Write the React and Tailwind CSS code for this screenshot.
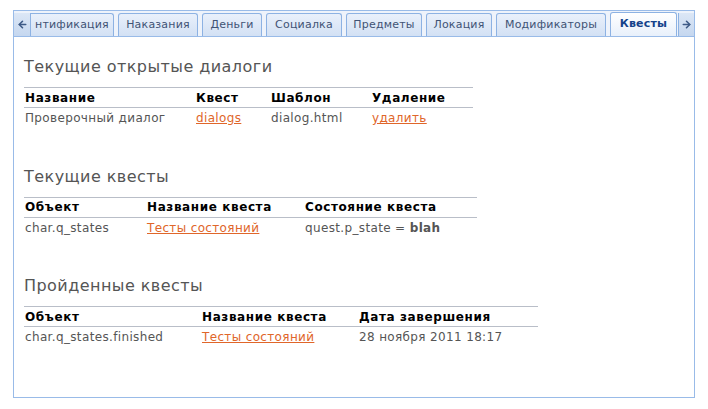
import { ArrowLeft, ArrowRight } from 'lucide-react';

const tabs = [
  ['Наказания', 'w-[80px]'],
  ['Деньги', 'w-[60px]'],
  ['Социалка', 'w-[76px]'],
  ['Предметы', 'w-[76px]'],
  ['Локация', 'w-[66px]'],
  ['Модификаторы', 'w-[110px]'],
];

function Tab({ label, active, className = '' }) {
  return (
    <div
      className={
        'shrink-0 flex items-center justify-center rounded-t-[3px] border border-b-0 border-[#8db2e3] text-[11px] tracking-[0.2px] ' +
        (active
          ? 'h-[24px] bg-gradient-to-b from-[#ffffff] to-[#e8f0fb] text-[#15428b] font-bold '
          : 'h-[23px] bg-gradient-to-b from-[#e9f0fb] to-[#d3e1f4] text-[#3f5375] ') +
        className
      }
    >
      {label}
    </div>
  );
}

function Section({ title, width, cols, row }) {
  return (
    <div className="mb-[38px]">
      <h2 className="text-[16px] tracking-[0.45px] text-[#555] leading-[20px] mb-[10px]">{title}</h2>
      <table className="border-collapse text-[12px] tracking-[0.35px]" style={{ width }}>
        <thead>
          <tr className="border-t border-b border-[#b9bec8]">
            {cols.map((c) => (
              <th key={c.label} className="text-left font-bold tracking-[0.6px] text-black h-[20px] p-0 pl-px" style={{ width: c.w }}>
                {c.label}
              </th>
            ))}
          </tr>
        </thead>
        <tbody>
          <tr>
            {row.map((cell, i) => (
              <td key={i} className="text-[#555] h-[21px] p-0 pl-px">
                {cell}
              </td>
            ))}
          </tr>
        </tbody>
      </table>
    </div>
  );
}

const link = (t) => <a className="text-[#e0662a] underline">{t}</a>;

export default function App() {
  return (
    <div className="w-[708px] h-[409px] bg-white pt-[10px] pl-[13px] font-['DejaVu_Sans',sans-serif]">
      <div className="w-[682px] h-[388px] border border-[#99bbe8] flex flex-col">
        <div className="flex items-end h-[26px] bg-[#eef3fb] border-b border-[#99bbe8] overflow-hidden">
          <div className="shrink-0 h-[23px] w-[17px] flex items-center justify-center bg-gradient-to-b from-[#dce7f6] to-[#c5d7ef] border-r border-[#8db2e3]">
            <ArrowLeft className="w-[11px] h-[11px] text-[#3d5a86]" strokeWidth={3.5} />
          </div>
          <Tab label="нтификация" className="border-l-0 rounded-tl-none !justify-start pl-[4px] w-[83px]" />
          <div className="flex items-end gap-[4px] ml-[4px]">
            {tabs.map(([t, w]) => (
              <Tab key={t} label={t} className={w} />
            ))}
            <Tab label="Квесты" active className="w-[67px]" />
          </div>
          <div className="shrink-0 h-[23px] w-[16px] flex items-center justify-center bg-gradient-to-b from-[#dce7f6] to-[#c5d7ef] border-l border-[#8db2e3] ml-auto">
            <ArrowRight className="w-[11px] h-[11px] text-[#3d5a86]" strokeWidth={3.5} />
          </div>
        </div>
        <div className="pl-[10px] pt-[20px]">
          <Section
            title="Текущие открытые диалоги"
            width={449}
            cols={[{ label: 'Название', w: 171 }, { label: 'Квест', w: 75 }, { label: 'Шаблон', w: 101 }, { label: 'Удаление' }]}
            row={['Проверочный диалог', link('dialogs'), 'dialog.html', link('удалить')]}
          />
          <Section
            title="Текущие квесты"
            width={453}
            cols={[{ label: 'Объект', w: 122 }, { label: 'Название квеста', w: 158 }, { label: 'Состояние квеста' }]}
            row={['char.q_states', link('Тесты состояний'), <span>quest.p_state = <b>blah</b></span>]}
          />
          <Section
            title="Пройденные квесты"
            width={514}
            cols={[{ label: 'Объект', w: 177 }, { label: 'Название квеста', w: 157 }, { label: 'Дата завершения' }]}
            row={['char.q_states.finished', link('Тесты состояний'), '28 ноября 2011 18:17']}
          />
        </div>
      </div>
    </div>
  );
}
